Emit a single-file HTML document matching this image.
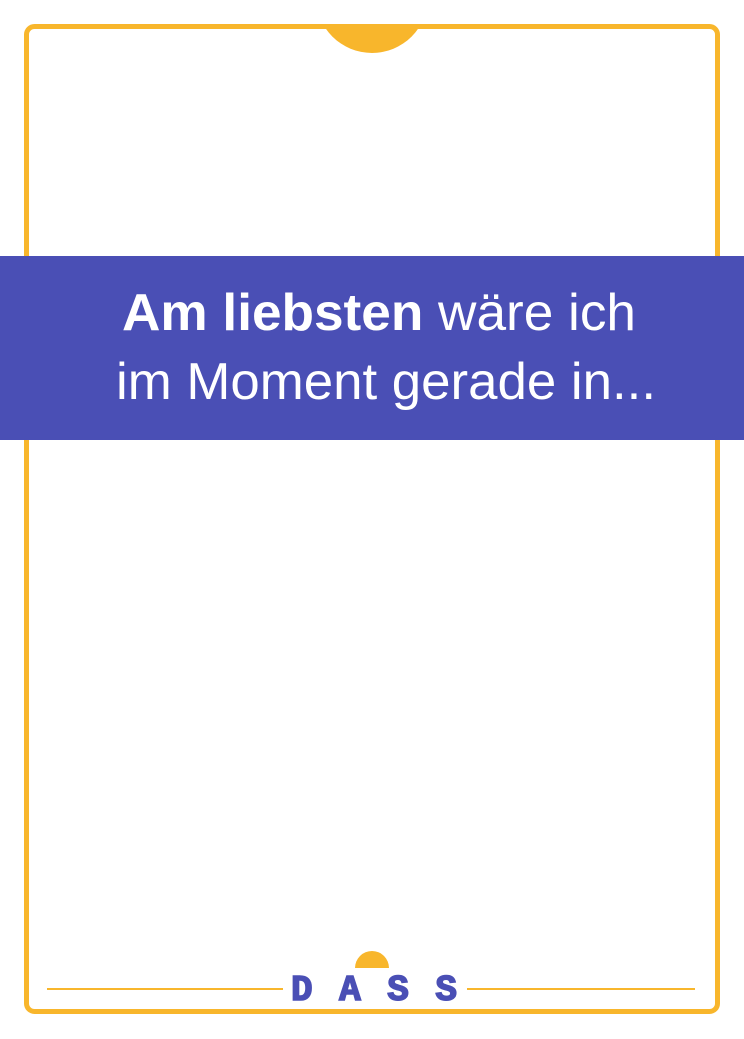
<!DOCTYPE html>
<html><head><meta charset="utf-8"><style>
html,body{margin:0;padding:0;background:#fff;width:744px;height:1039px;overflow:hidden}
</style></head><body>
<svg width="744" height="1039" viewBox="0 0 744 1039" xmlns="http://www.w3.org/2000/svg">
<defs><clipPath id="c"><rect x="0" y="26" width="744" height="100"/></clipPath></defs>
<rect x="0" y="0" width="744" height="1039" fill="#fff"/>
<circle cx="372" cy="-3" r="56" fill="#f8b62c" clip-path="url(#c)"/>
<rect x="26.5" y="26.5" width="691" height="985" rx="8" ry="8" fill="none" stroke="#f8b62c" stroke-width="5"/>
<rect x="0" y="256" width="744" height="184" fill="#4a4fb5"/>
<text x="122" y="330" font-family="Liberation Sans, sans-serif" font-size="52" fill="#fff" textLength="514" lengthAdjust="spacingAndGlyphs"><tspan font-weight="bold">Am liebsten</tspan> wäre ich</text>
<text x="116" y="399" font-family="Liberation Sans, sans-serif" font-size="52" fill="#fff" textLength="540" lengthAdjust="spacingAndGlyphs">im Moment gerade in...</text>
<path d="M355 968 A17 17 0 0 1 389 968 Z" fill="#f8b62c"/>
<line x1="47" y1="989" x2="283" y2="989" stroke="#f8b62c" stroke-width="2"/>
<line x1="467" y1="989" x2="695" y2="989" stroke="#f8b62c" stroke-width="2"/>
<text x="291" y="1000" font-family="Liberation Mono, monospace" font-weight="bold" font-size="36" fill="#4a4fb5" stroke="#4a4fb5" stroke-width="1.5" textLength="166" lengthAdjust="spacing">DASS</text>
</svg>
</body></html>
